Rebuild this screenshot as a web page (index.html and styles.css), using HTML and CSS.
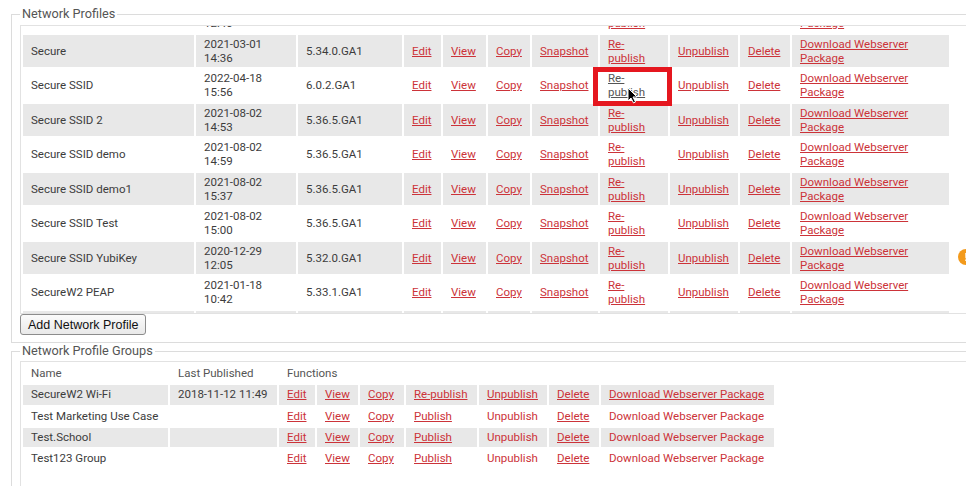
FILE: index.html
```html
<!DOCTYPE html>
<html lang="en">

<head>
  <meta charset="UTF-8">
  <title>Network Profiles</title>
  <link rel="stylesheet" href="styles.css">
</head>

<body>
  <div class="page">
    <fieldset class="panel">
      <legend>Network Profiles</legend>
      <div class="scroll" id="profileScroll">
        <table class="grid profiles">
          <colgroup>
            <col style="width:171px"><col style="width:100px"><col style="width:104px">
            <col style="width:37px"><col style="width:43px"><col style="width:42px">
            <col style="width:66px"><col style="width:68px"><col style="width:68px">
            <col style="width:50px"><col style="width:157px">
          </colgroup>
          <tr>
            <td>Onboarding</td><td>2021-02-26 12:40</td><td>5.34.0.GA1</td>
            <td><a href="#">Edit</a></td><td><a href="#">View</a></td><td><a href="#">Copy</a></td>
            <td><a href="#">Snapshot</a></td><td><a href="#">Re-publish</a></td><td><a href="#">Unpublish</a></td>
            <td><a href="#">Delete</a></td><td><a href="#">Download Webserver Package</a></td>
          </tr>
          <tr class="alt">
            <td>Secure</td><td>2021-03-01 14:36</td><td>5.34.0.GA1</td>
            <td><a href="#">Edit</a></td><td><a href="#">View</a></td><td><a href="#">Copy</a></td>
            <td><a href="#">Snapshot</a></td><td><a href="#">Re-publish</a></td><td><a href="#">Unpublish</a></td>
            <td><a href="#">Delete</a></td><td><a href="#">Download Webserver Package</a></td>
          </tr>
          <tr>
            <td>Secure SSID</td><td>2022-04-18 15:56</td><td>6.0.2.GA1</td>
            <td><a href="#">Edit</a></td><td><a href="#">View</a></td><td><a href="#">Copy</a></td>
            <td><a href="#">Snapshot</a></td><td><a href="#" class="hover">Re-publish</a></td><td><a href="#">Unpublish</a></td>
            <td><a href="#">Delete</a></td><td><a href="#">Download Webserver Package</a></td>
          </tr>
          <tr class="alt">
            <td>Secure SSID 2</td><td>2021-08-02 14:53</td><td>5.36.5.GA1</td>
            <td><a href="#">Edit</a></td><td><a href="#">View</a></td><td><a href="#">Copy</a></td>
            <td><a href="#">Snapshot</a></td><td><a href="#">Re-publish</a></td><td><a href="#">Unpublish</a></td>
            <td><a href="#">Delete</a></td><td><a href="#">Download Webserver Package</a></td>
          </tr>
          <tr>
            <td>Secure SSID demo</td><td>2021-08-02 14:59</td><td>5.36.5.GA1</td>
            <td><a href="#">Edit</a></td><td><a href="#">View</a></td><td><a href="#">Copy</a></td>
            <td><a href="#">Snapshot</a></td><td><a href="#">Re-publish</a></td><td><a href="#">Unpublish</a></td>
            <td><a href="#">Delete</a></td><td><a href="#">Download Webserver Package</a></td>
          </tr>
          <tr class="alt">
            <td>Secure SSID demo1</td><td>2021-08-02 15:37</td><td>5.36.5.GA1</td>
            <td><a href="#">Edit</a></td><td><a href="#">View</a></td><td><a href="#">Copy</a></td>
            <td><a href="#">Snapshot</a></td><td><a href="#">Re-publish</a></td><td><a href="#">Unpublish</a></td>
            <td><a href="#">Delete</a></td><td><a href="#">Download Webserver Package</a></td>
          </tr>
          <tr>
            <td>Secure SSID Test</td><td>2021-08-02 15:00</td><td>5.36.5.GA1</td>
            <td><a href="#">Edit</a></td><td><a href="#">View</a></td><td><a href="#">Copy</a></td>
            <td><a href="#">Snapshot</a></td><td><a href="#">Re-publish</a></td><td><a href="#">Unpublish</a></td>
            <td><a href="#">Delete</a></td><td><a href="#">Download Webserver Package</a></td>
          </tr>
          <tr class="alt">
            <td>Secure SSID YubiKey</td><td>2020-12-29 12:05</td><td>5.32.0.GA1</td>
            <td><a href="#">Edit</a></td><td><a href="#">View</a></td><td><a href="#">Copy</a></td>
            <td><a href="#">Snapshot</a></td><td><a href="#">Re-publish</a></td><td><a href="#">Unpublish</a></td>
            <td><a href="#">Delete</a></td><td><a href="#">Download Webserver Package</a></td>
          </tr>
          <tr>
            <td>SecureW2 PEAP</td><td>2021-01-18 10:42</td><td>5.33.1.GA1</td>
            <td><a href="#">Edit</a></td><td><a href="#">View</a></td><td><a href="#">Copy</a></td>
            <td><a href="#">Snapshot</a></td><td><a href="#">Re-publish</a></td><td><a href="#">Unpublish</a></td>
            <td><a href="#">Delete</a></td><td><a href="#">Download Webserver Package</a></td>
          </tr>
          <tr class="alt">
            <td>SecureW2 TLS</td><td>2021-01-18 10:50</td><td>5.33.1.GA1</td>
            <td><a href="#">Edit</a></td><td><a href="#">View</a></td><td><a href="#">Copy</a></td>
            <td><a href="#">Snapshot</a></td><td><a href="#">Re-publish</a></td><td><a href="#">Unpublish</a></td>
            <td><a href="#">Delete</a></td><td><a href="#">Download Webserver Package</a></td>
          </tr>
        </table>
      </div>
      <button class="btn" type="button">Add Network Profile</button>
    </fieldset>

    <fieldset class="panel groups">
      <legend>Network Profile Groups</legend>
      <div class="box">
        <table class="grid groupTable">
          <colgroup>
            <col style="width:145px"><col style="width:107px"><col style="width:36px">
            <col style="width:41px"><col style="width:44px"><col style="width:71px">
            <col style="width:68px"><col style="width:50px"><col style="width:173px">
          </colgroup>
          <tr class="head">
            <td>Name</td><td>Last Published</td><td colspan="7">Functions</td>
          </tr>
          <tr class="alt">
            <td>SecureW2 Wi-Fi</td><td>2018-11-12 11:49</td>
            <td><a href="#">Edit</a></td><td><a href="#">View</a></td><td><a href="#">Copy</a></td>
            <td><a href="#">Re-publish</a></td><td><a href="#">Unpublish</a></td><td><a href="#">Delete</a></td>
            <td><a href="#">Download Webserver Package</a></td>
          </tr>
          <tr>
            <td>Test Marketing Use Case</td><td></td>
            <td><a href="#">Edit</a></td><td><a href="#">View</a></td><td><a href="#">Copy</a></td>
            <td><a href="#">Publish</a></td><td class="off">Unpublish</td><td><a href="#">Delete</a></td>
            <td class="off">Download Webserver Package</td>
          </tr>
          <tr class="alt">
            <td>Test.School</td><td></td>
            <td><a href="#">Edit</a></td><td><a href="#">View</a></td><td><a href="#">Copy</a></td>
            <td><a href="#">Publish</a></td><td class="off">Unpublish</td><td><a href="#">Delete</a></td>
            <td class="off">Download Webserver Package</td>
          </tr>
          <tr>
            <td>Test123 Group</td><td></td>
            <td><a href="#">Edit</a></td><td><a href="#">View</a></td><td><a href="#">Copy</a></td>
            <td><a href="#">Publish</a></td><td class="off">Unpublish</td><td><a href="#">Delete</a></td>
            <td class="off">Download Webserver Package</td>
          </tr>
        </table>
      </div>
    </fieldset>
  </div>

  <!-- highlight drawn over the page in the recording -->
  <div class="mark"></div>
  <svg class="cursor" width="11" height="17" viewBox="0 0 11 17">
    <path d="M1 1 L1 14 L4 11 L6.5 16 L8.5 15 L6 10 L10 10 Z" fill="#000" stroke="#fff" stroke-width="1" stroke-linejoin="round"/>
  </svg>
  <div class="helpBubble"><span>!</span></div>

  <script>
    // table is scrolled a little in the screenshot
    document.getElementById('profileScroll').scrollTop = 28;
  </script>
</body>

</html>
```

FILE: styles.css
```css
* {
	box-sizing: border-box;
}

html,
body {
	overflow: hidden;
}

body {
	margin: 0;
	background: #fff;
	font-family: Roboto, "Liberation Sans", sans-serif;
	font-size: 11.5px;
	color: #3c3c3c;
}

a {
	color: #cc3339;
}

.page {
	width: 1010px;
	padding-left: 11px;
}

.panel {
	margin: 6px 0 0;
	padding: 3px 8px 7px;
	border: 1px solid #dcdcdc;
}

.panel legend {
	padding: 0 2px;
	font-size: 12.7px;
	line-height: 16px;
	color: #555;
}

.groups {
	margin-top: 0;
	padding-top: 2px;
	padding-bottom: 40px;
}

.scroll {
	height: 289px;
	overflow: scroll;
	border: 1px solid #e2e2e2;
}

.scroll::-webkit-scrollbar {
	width: 14px;
	height: 14px;
}

.scroll::-webkit-scrollbar-track {
	background: #f8f8f8;
	border-top: 1px solid #e6e6e6;
}

.scroll::-webkit-scrollbar-thumb {
	background: transparent;
}

.scroll::-webkit-scrollbar-corner {
	background: #f8f8f8;
}

.box {
	height: 140px;
	border: 1px solid #e2e2e2;
}

.grid {
	border-collapse: separate;
	border-spacing: 2px;
	table-layout: fixed;
}

.grid td {
	padding: 2px 8px;
	vertical-align: middle;
}

.grid tr.alt td {
	background: #e8e8e8;
}

.profiles {
	width: 930px;
}

.profiles td {
	line-height: 14.25px;
}

.groupTable {
	width: 755px;
}

.groupTable td {
	line-height: 15.25px;
	white-space: nowrap;
}

.groupTable .head td {
	color: #555;
}

.groupTable td.off {
	color: #cc3339;
}

.profiles a.hover {
	color: #555;
}

.btn {
	display: block;
	height: 21px;
	margin: 0;
	padding: 0 7px;
	border: 1px solid #8c8c8c;
	border-radius: 3px;
	background: linear-gradient(#fbfbfb, #e9e9e9);
	font-family: "Liberation Sans", Arial, sans-serif;
	font-size: 12.5px;
	color: #111;
}

.mark {
	position: absolute;
	left: 593px;
	top: 67px;
	width: 79px;
	height: 39px;
	border: 5px solid #e5171f;
}

.cursor {
	position: absolute;
	left: 627px;
	top: 87px;
}

.helpBubble {
	position: fixed;
	left: 958px;
	top: 249px;
	width: 16px;
	height: 16px;
	border-radius: 50%;
	background: #f39a1b;
	display: flex;
	justify-content: center;
	align-items: center;
}

.helpBubble span {
	color: #fff;
	font-family: "Liberation Sans", sans-serif;
	font-size: 11px;
	font-weight: bold;
}
```
